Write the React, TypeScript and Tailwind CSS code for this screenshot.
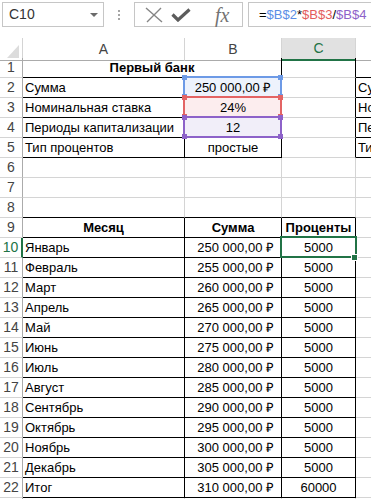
import React from "react";

type Cell = { t?: string; a?: "l" | "c" | "r"; b?: boolean };

const months = [
  "Январь",
  "Февраль",
  "Март",
  "Апрель",
  "Май",
  "Июнь",
  "Июль",
  "Август",
  "Сентябрь",
  "Октябрь",
  "Ноябрь",
  "Декабрь",
];

const money = (k: number) => `${k} 000,00 ₽`;

// rows 1..23, columns A..D
const rows: Cell[][] = [
  [{ t: "Первый банк", a: "c", b: true }, {}, {}, {}],
  [{ t: "Сумма" }, { t: money(250), a: "c" }, {}, { t: "Сумма" }],
  [{ t: "Номинальная ставка" }, { t: "24%", a: "c" }, {}, { t: "Номинальная ставка" }],
  [{ t: "Периоды капитализации" }, { t: "12", a: "c" }, {}, { t: "Периоды капитализации" }],
  [{ t: "Тип процентов" }, { t: "простые", a: "c" }, {}, { t: "Тип процентов" }],
  [{}, {}, {}, {}],
  [{}, {}, {}, {}],
  [{}, {}, {}, {}],
  [{ t: "Месяц", a: "c", b: true }, { t: "Сумма", a: "c", b: true }, { t: "Проценты", a: "c", b: true }, {}],
  ...months.map((m, i) => [{ t: m }, { t: money(250 + i * 5), a: "r" as const }, { t: "5000", a: "c" as const }, {}]),
  [{ t: "Итог" }, { t: money(310), a: "r" }, { t: "60000", a: "c" }, {}],
  [{}, {}, {}, {}],
];

// c: 1=A 2=B 3=C 4=D
const isTable = (r: number, c: number) =>
  (c >= 1 && c <= 3 && r >= 9 && r <= 22) ||
  ((c === 1 || c === 2) && r >= 1 && r <= 5) ||
  (c === 4 && r >= 1 && r <= 5);

const fills: Record<string, string> = {
  "2-2": "bg-[#edf2fc]",
  "3-2": "bg-[#fcedee]",
  "4-2": "bg-[#f1eef9]",
};

const align = (a?: string) =>
  a === "c" ? "justify-center" : a === "r" ? "justify-end pr-[7px]" : "justify-start pl-[2px]";

const GridCell = ({ r, c, cell, span }: { r: number; c: number; cell: Cell; span?: boolean }) => {
  const rightBlack = span || isTable(r, c) || isTable(r, c + 1);
  const bottomBlack = isTable(r, c) || isTable(r + 1, c);
  return (
    <div
      className={`h-5 border-r border-b flex items-center overflow-hidden whitespace-nowrap leading-[19px] ${
        rightBlack ? "border-r-black" : "border-r-[#d4d4d4]"
      } ${bottomBlack ? "border-b-black" : "border-b-[#d4d4d4]"} ${span ? "col-span-2" : ""} ${
        fills[`${r}-${c}`] ?? ""
      } ${align(cell.a)} ${cell.b ? "font-bold" : ""}`}
    >
      {cell.t && <span>{cell.t}</span>}
    </div>
  );
};

const Box = ({ top, color, fill }: { top: number; color: string; fill?: string }) => {
  const sq = `absolute w-[5px] h-[5px] ${fill}`;
  return (
    <div className={`absolute left-[183px] w-[99px] h-[22px] border-2 ${color}`} style={{ top }}>
      <div className={`${sq} -left-[3px] -top-[3px]`} />
      <div className={`${sq} -right-[3px] -top-[3px]`} />
      <div className={`${sq} -left-[3px] -bottom-[3px]`} />
      <div className={`${sq} -right-[3px] -bottom-[3px]`} />
    </div>
  );
};

export default function App() {
  return (
    <div className="w-[371px] h-[499px] overflow-hidden bg-white font-['Liberation_Sans',Arial,sans-serif] text-[13px] text-black">
      {/* formula bar */}
      <div className="h-[38px] flex items-start pt-[2px]">
        <div className="ml-[2px] w-[102px] h-[25px] shrink-0 border border-[#c6c6c6] flex items-center justify-between pl-[6px] pr-[5px]">
          <span className="text-[14px] text-[#333]">C10</span>
          <svg width="8" height="4" viewBox="0 0 8 4">
            <path d="M0 0H8L4 4Z" fill="#6b6b6b" />
          </svg>
        </div>
        <div className="w-[30px] shrink-0 flex flex-col items-center gap-[2px] pt-[8px]">
          <div className="w-[2px] h-[2px] bg-[#a6a6a6]" />
          <div className="w-[2px] h-[2px] bg-[#a6a6a6]" />
          <div className="w-[2px] h-[2px] bg-[#a6a6a6]" />
        </div>
        <div className="w-[109px] h-[25px] shrink-0 border border-[#c6c6c6] flex items-center">
          <svg className="ml-[10px]" width="18" height="16" viewBox="0 0 18 16">
            <path d="M1 1L17 15M16 1L2 15" stroke="#858585" strokeWidth="1.4" fill="none" />
          </svg>
          <svg className="ml-[8px]" width="20" height="14" viewBox="0 0 20 14">
            <path d="M1.5 6.5L7 12L18.5 1.5" stroke="#5c5c5c" strokeWidth="3.2" fill="none" />
          </svg>
          <span className="ml-[24px] font-['Liberation_Serif',serif] italic text-[20px] leading-none text-[#737373]">fx</span>
        </div>
        <div className="ml-[5px] w-[160px] h-[25px] shrink-0 border border-[#c6c6c6] flex items-center pl-[10px] text-[13px] whitespace-nowrap">
          <span>=</span>
          <span className="text-[#5b8ee6]">$B$2</span>
          <span>*</span>
          <span className="text-[#e35d5d]">$B$3</span>
          <span>/</span>
          <span className="text-[#8d62c9]">$B$4</span>
        </div>
      </div>

      {/* sheet */}
      <div className="relative">
        <div className="grid grid-cols-[23px_162px_97px_74px_120px] h-5 text-[14px] text-[#444]">
          <div className="border-r border-r-[#d4d4d4] border-b border-b-[#ababab] flex items-end justify-end pr-[3px] pb-[2px]">
            <svg width="12" height="13" viewBox="0 0 12 13">
              <path d="M0 13H12V0Z" fill="#dcdcdc" />
            </svg>
          </div>
          <div className="border-r border-r-[#d4d4d4] border-b border-b-[#ababab] flex items-center justify-center">A</div>
          <div className="border-r border-r-[#d4d4d4] border-b border-b-[#ababab] flex items-center justify-center">B</div>
          <div className="bg-[#e1e1e1] border-r border-r-[#d4d4d4] border-b-2 border-b-[#217346] flex items-center justify-center text-[#217346]">C</div>
          <div className="border-r border-r-[#d4d4d4] border-b border-b-[#ababab]" />
        </div>
        {rows.map((row, i) => {
          const r = i + 1;
          return (
            <div key={r} className="grid grid-cols-[23px_162px_97px_74px_120px]">
              <div
                className={`h-5 border-b border-b-[#d4d4d4] flex items-center justify-center text-[14px] ${
                  r === 10 ? "border-r-2 border-r-[#217346] text-[#217346]" : "border-r border-r-[#ababab] text-[#444]"
                }`}
              >
                {r}
              </div>
              {r === 1 ? (
                <>
                  <GridCell r={r} c={1} cell={row[0]} span />
                  <GridCell r={r} c={3} cell={row[2]} />
                  <GridCell r={r} c={4} cell={row[3]} />
                </>
              ) : (
                row.map((cell, j) => <GridCell key={j} r={r} c={j + 1} cell={cell} />)
              )}
            </div>
          );
        })}

        {/* reference highlights */}
        <Box top={38} color="border-[#6d9ae6]" fill="bg-[#6d9ae6]" />
        <Box top={58} color="border-[#e36464]" fill="bg-[#e36464]" />
        <Box top={78} color="border-[#8d62c9]" fill="bg-[#8d62c9]" />

        {/* active cell C10 */}
        <div className="absolute left-[280px] top-[198px] w-[77px] h-[22px] border-2 border-[#217346]" />
        <div className="absolute left-[351px] top-[216px] w-[7px] h-[7px] bg-[#217346] border border-white" />
      </div>
    </div>
  );
}
